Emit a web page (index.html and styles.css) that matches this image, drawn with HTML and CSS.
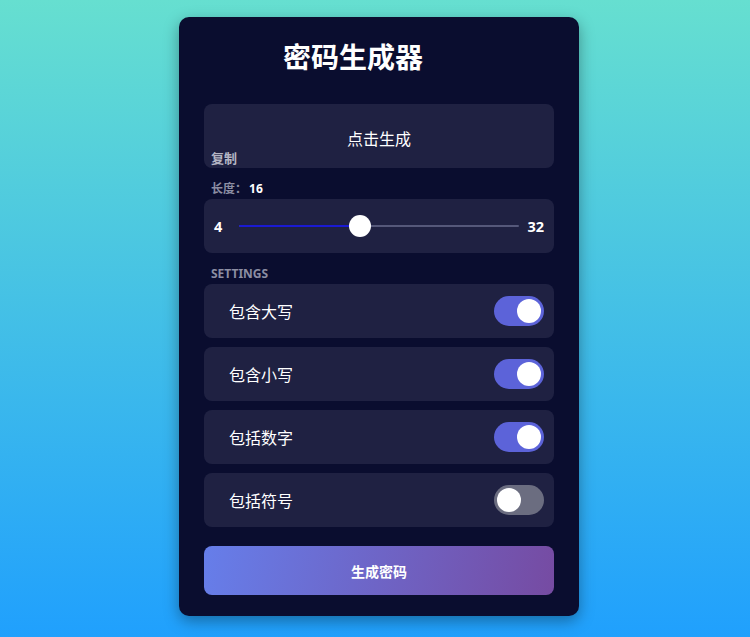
FILE: index.html
```html
<!DOCTYPE html>
<html lang="zh">
<head>
  <meta charset="UTF-8" />
  <meta name="viewport" content="width=device-width, initial-scale=1" />
  <title>密码生成器</title>
  <link rel="stylesheet" href="styles.css">
</head>
<body>

  <div class="container">
    <h2 class="title">密码生成器</h2>

    <div class="result">
      <span class="result-text">点击生成</span>
      <button class="copy-btn">复制</button>
    </div>

    <div class="label">长度：<span class="length-value">16</span></div>
    <div class="slider-box">
      <span class="range-num">4</span>
      <div class="track">
        <div class="track-fill" style="width: 43%"></div>
        <div class="thumb" style="left: 43%"></div>
      </div>
      <span class="range-num">32</span>
    </div>

    <div class="label">SETTINGS</div>
    <div class="settings">
      <div class="setting">
        <span class="setting-name">包含大写</span>
        <div class="toggle on"><div class="knob"></div></div>
      </div>
      <div class="setting">
        <span class="setting-name">包含小写</span>
        <div class="toggle on"><div class="knob"></div></div>
      </div>
      <div class="setting">
        <span class="setting-name">包括数字</span>
        <div class="toggle on"><div class="knob"></div></div>
      </div>
      <div class="setting">
        <span class="setting-name">包括符号</span>
        <div class="toggle"><div class="knob"></div></div>
      </div>
    </div>

    <button class="generate-btn">生成密码</button>
  </div>

</body>
</html>
```

FILE: styles.css
```css
body {
  margin: 0;
  height: 637px;
  font-family: "Noto Sans", "Noto Sans CJK SC", sans-serif;
  background: linear-gradient(to bottom, #66dfd0, #20a0fd);
  color: white;
  display: flex;
  justify-content: center;
  align-items: flex-start;
  padding-left: 8px;
  box-sizing: border-box;
  overflow: hidden;
}

.container {
  width: 400px;
  box-sizing: border-box;
  margin-top: 17px;
  padding: 23px 25px 21px 25px;
  background: #0a0d2f;
  border-radius: 10px;
  box-shadow: 0 5px 15px rgba(0, 0, 0, 0.35);
}

.title {
  margin: 0 0 30px 0;
  font-size: 28px;
  line-height: 34px;
  font-weight: 700;
  padding-left: 79px;
}

.result {
  position: relative;
  height: 64px;
  background: #1f2142;
  border-radius: 8px;
  display: flex;
  align-items: center;
  justify-content: center;
  padding-top: 4px;
  box-sizing: border-box;
}

.result-text {
  font-size: 16px;
}

.copy-btn {
  position: absolute;
  left: 7px;
  bottom: 1px;
  background: none;
  border: none;
  padding: 0;
  font-family: inherit;
  font-size: 13px;
  font-weight: 700;
  color: #b4b5c4;
  line-height: 18px;
}

.label {
  margin: 13px 0 2px 0;
  padding-left: 7px;
  font-size: 12px;
  line-height: 16px;
  font-weight: 700;
  color: #8c8ea3;
}

.length-value {
  color: white;
  margin-left: 2px;
}

.slider-box {
  height: 54px;
  background: #1f2142;
  border-radius: 8px;
  display: flex;
  align-items: center;
  padding: 0 10px;
}

.range-num {
  font-size: 14.5px;
  font-weight: 700;
}

.track {
  flex: 1;
  position: relative;
  height: 2px;
  background: #55587a;
  margin: 0 8px 0 17px;
  border-radius: 1px;
}

.track-fill {
  height: 100%;
  background: #1a1ad2;
  border-radius: 1px;
}

.thumb {
  position: absolute;
  top: 50%;
  width: 22px;
  height: 22px;
  margin: -11px 0 0 -11px;
  border-radius: 50%;
  background: white;
}

.settings {
  display: flex;
  flex-direction: column;
  gap: 9px;
}

.setting {
  height: 54px;
  background: #1f2142;
  border-radius: 8px;
  display: flex;
  align-items: center;
  justify-content: space-between;
  padding: 0 10px 0 25px;
}

.setting-name {
  font-size: 16px;
}

.toggle {
  width: 50px;
  height: 30px;
  border-radius: 15px;
  background: #6b6d80;
  display: flex;
  align-items: center;
  padding: 0 3px;
  box-sizing: border-box;
}

.toggle.on {
  background: #5c63d9;
  justify-content: flex-end;
}

.knob {
  width: 24px;
  height: 24px;
  border-radius: 50%;
  background: white;
}

.generate-btn {
  display: block;
  width: 100%;
  height: 49px;
  margin-top: 19px;
  border: none;
  border-radius: 8px;
  background: linear-gradient(100deg, #667eea, #764ba2);
  color: white;
  font-family: inherit;
  font-size: 14px;
  font-weight: 700;
}
```
